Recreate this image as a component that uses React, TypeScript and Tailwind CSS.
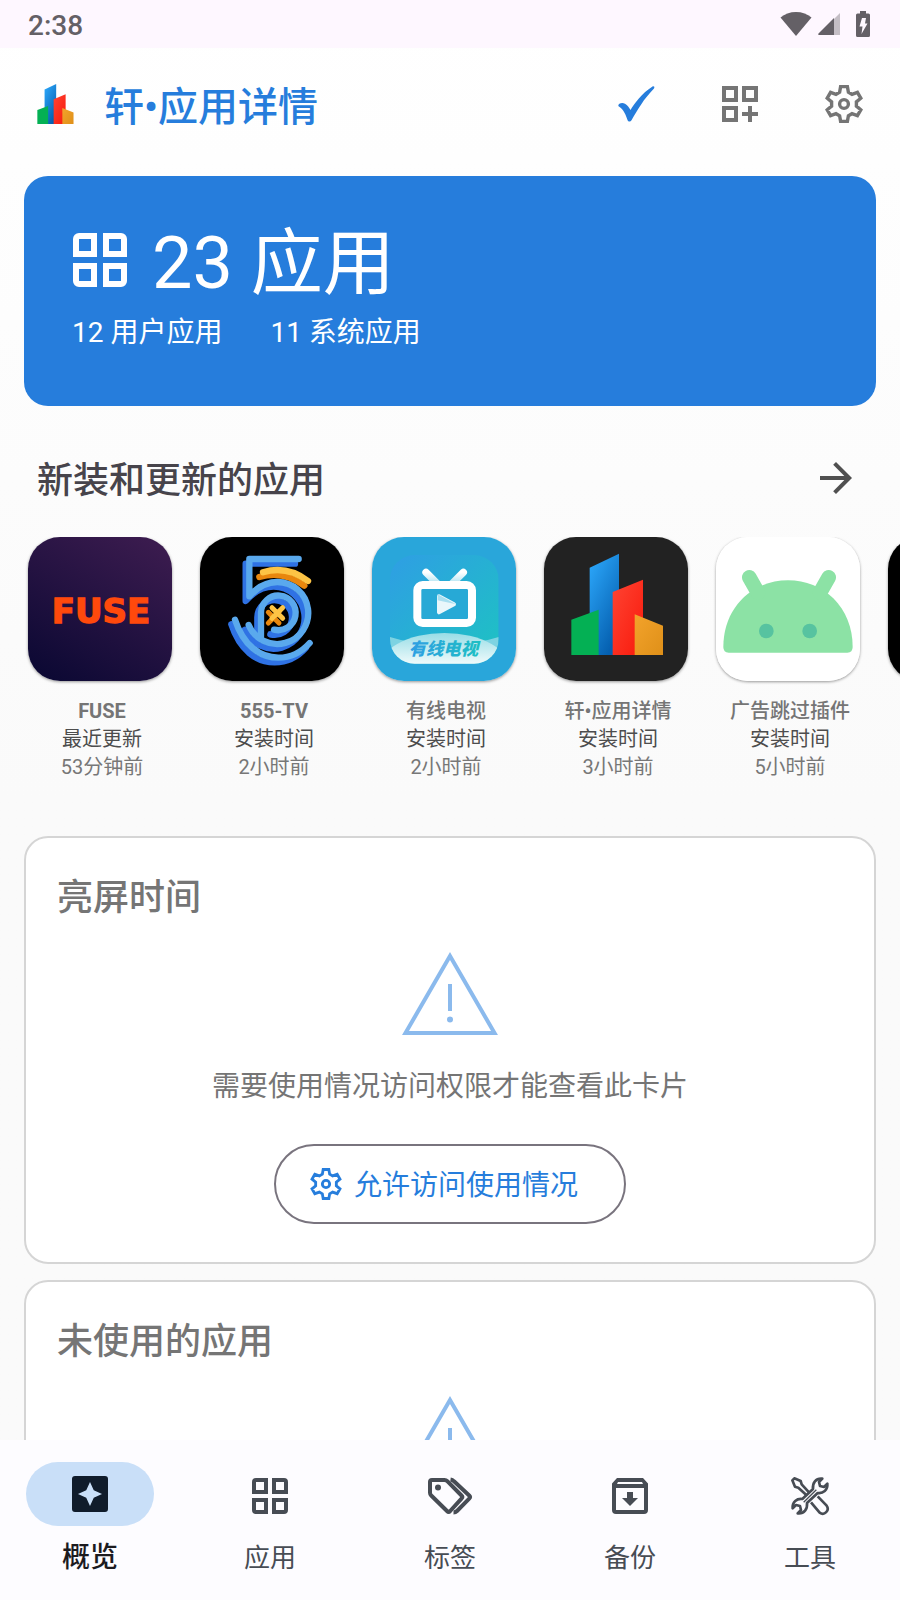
import React, { useState } from 'react';

interface RecentApp {
  name: string;
  action: string;
  time: string;
  icon: React.ReactNode;
}

interface IconProps {
  className?: string;
}

const CheckIcon: React.FC<IconProps> = ({ className }) => (
  <svg viewBox="0 0 37 36" className={className} fill="currentColor" aria-hidden="true">
    <path d="M0.300 20C0 17.500 4 16.300 7 17.700C9.500 19 11.200 21.500 12.500 24C16 18 24 7 34.500 0.500C36 0 37 1 36 2.500C30.500 8.500 26.500 13 23.500 18C20 23 17 28 13.500 34.300C12.500 36 10.300 36 9.500 34C8 29.500 6 23.500 0.300 20Z" />
  </svg>
);

const AddWidgetIcon: React.FC<IconProps> = ({ className }) => (
  <svg viewBox="0 0 24 24" className={className} fill="none" stroke="currentColor" strokeWidth="2" aria-hidden="true">
    <path d="M4 4h6v6H4zM14 4h6v6h-6zM4 14h6v6H4zM17 13v8M13 17h8" />
  </svg>
);

const GridIcon: React.FC<IconProps> = ({ className }) => (
  <svg viewBox="0 0 24 24" className={className} fill="currentColor" fillRule="evenodd" aria-hidden="true">
    <path d="M5 3H11V11H3V5a2 2 0 0 1 2-2ZM5 5V9H9V5Z" />
    <path d="M13 3H19a2 2 0 0 1 2 2V11H13ZM15 5V9H19V5Z" />
    <path d="M3 13H11V21H5a2 2 0 0 1-2-2ZM5 15V19H9V15Z" />
    <path d="M13 13H21V19a2 2 0 0 1-2 2H13ZM15 15V19H19V15Z" />
  </svg>
);

const GearIcon: React.FC<IconProps> = ({ className }) => (
  <svg viewBox="0 0 24 24" className={className} fill="none" stroke="currentColor" strokeWidth="1.7" aria-hidden="true">
    <path d="M9.800 6.100L10.300 3.300H13.700L14.200 6.100L16 7.140L18.700 6.200L20.400 9.100L18.200 10.950V13.050L20.400 14.900L18.700 17.800L16 16.860L14.200 17.900L13.700 20.700H10.300L9.800 17.900L8 16.860L5.300 17.800L3.600 14.900L5.800 13.050V10.950L3.600 9.100L5.300 6.200L8 7.140Z" />
    <circle cx="12" cy="12" r="2.2" />
  </svg>
);

const ArrowIcon: React.FC<IconProps> = ({ className }) => (
  <svg viewBox="0 0 24 24" className={className} fill="currentColor" aria-hidden="true">
    <path d="M12 4l-1.410 1.410L16.170 11H4v2h12.170l-5.580 5.590L12 20l8-8z" />
  </svg>
);

const WarningIcon: React.FC<IconProps> = ({ className }) => (
  <svg viewBox="0 0 96 84" className={className} fill="none" stroke="currentColor" strokeWidth="4" aria-hidden="true">
    <path d="M48 4L92.500 81H3.500ZM48 32V59" />
    <circle cx="48" cy="67.500" r="3" fill="currentColor" stroke="none" />
  </svg>
);

const OverviewIcon: React.FC<IconProps> = ({ className }) => (
  <svg viewBox="0 0 24 24" className={className} fill="currentColor" fillRule="evenodd" aria-hidden="true">
    <path d="M4.500 3H19.500A1.500 1.500 0 0 1 21 4.500V19.500A1.500 1.500 0 0 1 19.500 21H4.500A1.500 1.500 0 0 1 3 19.500V4.500A1.500 1.500 0 0 1 4.500 3ZM12 6L10.120 10.120L6 12L10.120 13.880L12 18L13.880 13.880L18 12L13.880 10.120Z" />
  </svg>
);

const TagsIcon: React.FC<IconProps> = ({ className }) => (
  <svg viewBox="0 0 48 48" className={className} fill="none" stroke="currentColor" strokeWidth="4" strokeLinejoin="round" aria-hidden="true">
    <path d="M6 8H18.500C19.700 8 20.500 8.300 21.300 9.100L35.500 23.500C36.500 24.500 36.500 25.700 35.500 26.700L24.200 39C23.200 40 22 40 21 39L5.200 23.500C4.400 22.700 4 22 4 20.800V10C4 8.800 4.800 8 6 8Z" />
    <path d="M24.500 7.500C26 7.700 27 8.300 28 9.300L43.200 23.500C44.200 24.500 44.200 25.700 43.200 26.700L31 39C30 40 29 40.400 27.500 40.400" />
    <circle cx="12" cy="15.500" r="3" fill="currentColor" stroke="none" />
  </svg>
);

const BackupIcon: React.FC<IconProps> = ({ className }) => (
  <svg viewBox="0 0 24 24" className={className} fill="currentColor" fillRule="evenodd" aria-hidden="true">
    <path d="M5.500 3H18.500L21 5.700V19a2 2 0 0 1-2 2H5a2 2 0 0 1-2-2V5.700ZM6 5L5.500 6H18.500L18 5ZM5 8V19H19V8Z" />
    <path d="M10.500 10h3v3H16l-4 4l-4-4h2.500z" />
  </svg>
);

const ToolsIcon: React.FC<IconProps> = ({ className }) => (
  <svg viewBox="-15 -15 144 144" className={className} fill="none" stroke="currentColor" strokeWidth="8" strokeLinejoin="round" aria-hidden="true">
    <path d="M54 46L32 22L29 12L10 4L4 10L12 29L22 32L46 54" />
    <path d="M80 58L107 86C117 100 100 117 86 107L60 76" />
    <path d="M66 36C64 18 74 3 94 5L84 15L87 27L99 30L109 20C111 40 96 50 80 48L48 78C50 96 40 111 20 109L30 99L27 87L15 84L5 94C3 74 18 64 34 66Z" />
    <path d="M76 38L38 76" strokeWidth="4" />
  </svg>
);

const Towers = () => (
  <>
    <defs>
      <linearGradient id="towerBlue" x1="0" y1="0" x2="0.6" y2="1">
        <stop offset="0" stopColor="#2eabff" />
        <stop offset="1" stopColor="#0560b0" />
      </linearGradient>
      <linearGradient id="towerRed" x1="0" y1="0" x2="1" y2="1">
        <stop offset="0" stopColor="#ff4433" />
        <stop offset="1" stopColor="#f81a0c" />
      </linearGradient>
      <linearGradient id="towerGold" x1="0" y1="0" x2="1" y2="1">
        <stop offset="0" stopColor="#f3a32b" />
        <stop offset="1" stopColor="#df9019" />
      </linearGradient>
    </defs>
    <path d="M137 92L225 50V354H137Z" fill="url(#towerBlue)" />
    <path d="M206 165L297 128V354H206Z" fill="url(#towerRed)" />
    <path d="M82 248L164 218V354H82Z" fill="#04b054" />
    <path d="M272 232L357 266V354H272Z" fill="url(#towerGold)" />
  </>
);

const FuseLogo = () => (
  <svg viewBox="0 0 432 432" className="block h-full w-full" aria-hidden="true">
    <defs>
      <linearGradient id="fuseBg" x1="0.2" y1="1" x2="0.8" y2="0">
        <stop offset="0" stopColor="#0d0934" />
        <stop offset="1" stopColor="#3a1b4e" />
      </linearGradient>
    </defs>
    <rect width="432" height="432" fill="url(#fuseBg)" />
    <text
      x="219"
      y="258"
      textAnchor="middle"
      className="font-['DejaVu_Sans',sans-serif] text-[102px] font-bold"
      fill="#ff490c"
      stroke="#ff490c"
      strokeWidth="4"
    >
      FUSE
    </text>
  </svg>
);

const FiveStrokes = () => (
  <>
    <path d="M296 66H148V178Q185 135 232 135A93 93 0 1 1 146 264" />
    <path d="M183 298V227A52 52 0 1 1 222 278" />
    <path d="M105 248C130 325 180 362 235 362C275 362 305 345 329 318" />
  </>
);

const TvFiveLogo = () => (
  <svg viewBox="0 0 432 432" className="block h-full w-full" fill="none" strokeWidth="19" strokeLinecap="round" strokeLinejoin="round" aria-hidden="true">
    <rect width="432" height="432" fill="#000" />
    <g stroke="#2f72e4" transform="translate(-11 14)"><FiveStrokes /></g>
    <g stroke="#e8870e" transform="translate(-11 14)">
      <path d="M189 106Q260 84 324 132" />
      <path d="M216 212L248 244M248 212L216 244" strokeWidth="15" />
    </g>
    <g stroke="#5aa9ed"><FiveStrokes /></g>
    <g stroke="#fdc445">
      <path d="M189 106Q260 84 324 132" />
      <path d="M216 212L248 244M248 212L216 244" strokeWidth="15" />
    </g>
  </svg>
);

const CableTvLogo = () => (
  <svg viewBox="0 0 432 432" className="block h-full w-full" aria-hidden="true">
    <defs>
      <linearGradient id="tvTile" x1="0" y1="0" x2="1" y2="1">
        <stop offset="0" stopColor="#2f9ee4" />
        <stop offset="1" stopColor="#1dc3c2" />
      </linearGradient>
      <linearGradient id="tvHill" x1="0" y1="288" x2="0" y2="380" gradientUnits="userSpaceOnUse">
        <stop offset="0" stopColor="#98dde6" />
        <stop offset="1" stopColor="#eefafb" />
      </linearGradient>
      <linearGradient id="tvAerial" x1="0" y1="0" x2="0" y2="1">
        <stop offset="0" stopColor="#fff" />
        <stop offset="1" stopColor="#a5dff0" />
      </linearGradient>
      <linearGradient id="tvText" x1="0" y1="0" x2="1" y2="0">
        <stop offset="0" stopColor="#2f9ee4" />
        <stop offset="1" stopColor="#1dbfc3" />
      </linearGradient>
      <clipPath id="tvClip">
        <rect x="54" y="54" width="326" height="326" rx="74" />
      </clipPath>
    </defs>
    <rect width="432" height="432" fill="#29a6da" />
    <g clipPath="url(#tvClip)">
      <rect x="54" y="54" width="326" height="326" fill="url(#tvTile)" />
      <path d="M54 300Q120 322 217 322T380 300V380H54Z" fill="#7dd3e2" />
      <ellipse cx="217" cy="400" rx="200" ry="112" fill="url(#tvHill)" />
    </g>
    <path d="M162 106L200 144M274 106L236 144" stroke="url(#tvAerial)" strokeWidth="22" strokeLinecap="round" />
    <rect x="136" y="144" width="164" height="114" rx="16" fill="#27a9d6" stroke="#fff" strokeWidth="24" />
    <path d="M201 178L246 202L201 226Z" fill="#e9f7fb" stroke="#e9f7fb" strokeWidth="12" strokeLinejoin="round" />
    <path d="M197 172L252 202L197 190Z" fill="#a9dff0" />
    <text x="214" y="355" textAnchor="middle" className="font-['Noto_Sans_CJK_SC',sans-serif] text-[52px] font-black italic" fill="url(#tvText)">有线电视</text>
  </svg>
);

const TowersLogo = () => (
  <svg viewBox="0 0 432 432" className="block h-full w-full" aria-hidden="true">
    <rect width="432" height="432" fill="#222" />
    <Towers />
  </svg>
);

const RobotLogo = () => (
  <svg viewBox="0 0 432 432" className="block h-full w-full" aria-hidden="true">
    <rect width="432" height="432" fill="#fff" />
    <path d="M22 330C22 210 110 130 216 130S410 210 410 330Q410 347 394 347H38Q22 347 22 330Z" fill="#8ce2a5" />
    <path d="M100 121L126 167M338 121L312 167" stroke="#8ce2a5" strokeWidth="44" strokeLinecap="round" />
    <circle cx="151" cy="282" r="22" fill="#57c3a0" />
    <circle cx="281" cy="282" r="22" fill="#57c3a0" />
  </svg>
);

const recentApps: RecentApp[] = [
  { name: 'FUSE', action: '最近更新', time: '53分钟前', icon: <FuseLogo /> },
  { name: '555-TV', action: '安装时间', time: '2小时前', icon: <TvFiveLogo /> },
  { name: '有线电视', action: '安装时间', time: '2小时前', icon: <CableTvLogo /> },
  { name: '轩•应用详情', action: '安装时间', time: '3小时前', icon: <TowersLogo /> },
  { name: '广告跳过插件', action: '安装时间', time: '5小时前', icon: <RobotLogo /> },
  { name: '', action: '', time: '', icon: <div className="h-full w-full bg-black" /> },
];

const navItems = [
  { label: '概览', Icon: OverviewIcon },
  { label: '应用', Icon: GridIcon },
  { label: '标签', Icon: TagsIcon },
  { label: '备份', Icon: BackupIcon },
  { label: '工具', Icon: ToolsIcon },
];

// Latin names need a heavier weight to look even with the Chinese ones
const isLatin = (name: string) => /^[A-Z0-9-]+$/i.test(name);

const StatusBar = () => (
  <div className="flex h-12 shrink-0 items-center justify-between bg-[#fef7ff] px-7 text-[#646066]">
    <span className="pt-1 text-[28px] font-medium">2:38</span>
    <div className="flex items-center">
      <svg viewBox="0 0 32 24" className="mr-1.5 h-6 w-8" fill="currentColor" aria-hidden="true">
        <path d="M16 24L0.500 5.500C4.500 2 10 0 16 0S27.500 2 31.500 5.500Z" />
      </svg>
      <svg viewBox="0 0 22 22" className="mr-4 h-[22px] w-[22px]" aria-hidden="true">
        <path d="M16 6L22 0V22H16Z" fill="#c4bec5" />
        <path d="M16 5V22H1C0 22 0 21 0.500 20.500Z" fill="currentColor" />
      </svg>
      <svg viewBox="0 0 14 26" className="mr-0.5 h-[26px] w-3.5" fill="currentColor" aria-hidden="true">
        <path d="M4 0H10V2.500H12.500Q14 2.500 14 4V24.500Q14 26 12.500 26H1.500Q0 26 0 24.500V4Q0 2.500 1.500 2.500H4Z" />
        <path d="M6 7H10L9 12.500H11.500L5.500 23L6.500 15.500H3.500Z" fill="#fef7ff" />
      </svg>
    </div>
  </div>
);

interface PermissionCardProps {
  title: string;
  children?: React.ReactNode;
}

const PermissionCard: React.FC<PermissionCardProps> = ({ title, children }) => (
  <section className="flex min-h-[428px] shrink-0 flex-col items-center rounded-3xl border-2 border-[#d5d5d5] bg-white px-[31px] pt-[34px] pb-[38px]">
    <h2 className="self-start text-[36px] leading-[52px] font-medium text-[#757575]">{title}</h2>
    <WarningIcon className="mt-7 h-[84px] w-24 text-[#8bbaed]" />
    {children}
  </section>
);

const App: React.FC = () => {
  const [activeTab, setActiveTab] = useState('概览');

  return (
    <div className="flex h-screen flex-col overflow-hidden bg-linear-to-b from-white to-[#fafafa] to-50% font-['Roboto','Noto_Sans_CJK_SC',sans-serif]">
      <StatusBar />

      <main className="flex min-h-0 flex-1 flex-col overflow-hidden">
        {/* Title bar */}
        <header className="flex h-28 shrink-0 items-center pr-8 pl-[37px]">
          <svg viewBox="82 50 276 304" className="h-10 w-[37px]" aria-hidden="true">
            <Towers />
          </svg>
          <h1 className="ml-[30px] flex-1 pt-2 text-[40px] font-medium text-[#267ddc]">轩•应用详情</h1>
          <div className="flex gap-14">
            <button type="button" aria-label="完成" className="flex h-12 w-12 items-center justify-center text-[#267ddc]">
              <CheckIcon className="h-9 w-[37px]" />
            </button>
            <button type="button" aria-label="添加" className="text-[#757575]">
              <AddWidgetIcon className="h-12 w-12" />
            </button>
            <button type="button" aria-label="设置" className="text-[#757575]">
              <GearIcon className="h-12 w-12" />
            </button>
          </div>
        </header>

        <div className="flex flex-col px-6 pt-4">
          {/* Totals */}
          <section className="shrink-0 rounded-3xl bg-[#267ddc] px-10 pt-10 pb-[52px] text-white">
            <div className="flex items-start gap-4">
              <GridIcon className="mt-2 h-[72px] w-[72px]" />
              <span className="text-[72px] leading-[96px]">23 应用</span>
            </div>
            <div className="flex gap-12 px-2 text-[28px] leading-[42px]">
              <span>12 用户应用</span>
              <span>11 系统应用</span>
            </div>
          </section>

          {/* Recent apps */}
          <div className="mt-12 flex h-12 shrink-0 items-center justify-between pr-4 pl-[13px]">
            <h2 className="pt-1.5 text-[36px] font-medium text-[#47444b]">新装和更新的应用</h2>
            <button type="button" aria-label="更多" className="text-[#505050]">
              <ArrowIcon className="h-12 w-12" />
            </button>
          </div>
        </div>

        <ul className="mt-[35px] flex shrink-0 overflow-hidden pl-4">
          {recentApps.map((app, index) => (
            <li key={index} className="flex w-[172px] shrink-0 flex-col items-center text-[20px] leading-7">
              <div className="mb-4 ml-3 h-36 w-36 self-start overflow-hidden rounded-[32px] shadow-[0_1px_3px_rgba(0,0,0,0.4)]">{app.icon}</div>
              <span className={`text-[#757575] ${isLatin(app.name) ? 'font-bold' : 'font-medium'}`}>{app.name}</span>
              <span className="text-[#4d4d4d]">{app.action}</span>
              <span className="text-[#777]">{app.time}</span>
            </li>
          ))}
        </ul>

        <div className="mt-[55px] flex flex-col gap-4 px-6">
          <PermissionCard title="亮屏时间">
            <p className="mt-[31px] text-[28px] leading-10 text-[#757575]">需要使用情况访问权限才能查看此卡片</p>
            <button
              type="button"
              className="mt-[37px] flex h-20 items-center gap-2 rounded-full border-2 border-[#79747e] pr-[46px] pl-[30px] text-[28px] text-[#267ddc]"
            >
              <GearIcon className="h-10 w-10" />
              <span className="pt-1">允许访问使用情况</span>
            </button>
          </PermissionCard>
          <PermissionCard title="未使用的应用" />
        </div>
      </main>

      <nav className="flex h-40 shrink-0 items-center bg-[#fdfcff]">
        {navItems.map(({ label, Icon }) => {
          const active = label === activeTab;
          return (
            <button
              key={label}
              type="button"
              onClick={() => setActiveTab(label)}
              className={`flex flex-1 flex-col items-center gap-3 ${
                active
                  ? 'text-[28px] leading-10 font-medium text-[#1c1b1f]'
                  : 'text-[26px] leading-9 text-[#474c54]'
              }`}
            >
              <span
                className={`flex h-16 w-32 items-center justify-center rounded-full ${
                  active ? 'bg-[#c9dff8] text-[#101c2b]' : ''
                }`}
              >
                <Icon className="h-12 w-12" />
              </span>
              {label}
            </button>
          );
        })}
      </nav>
    </div>
  );
};

export default App;
